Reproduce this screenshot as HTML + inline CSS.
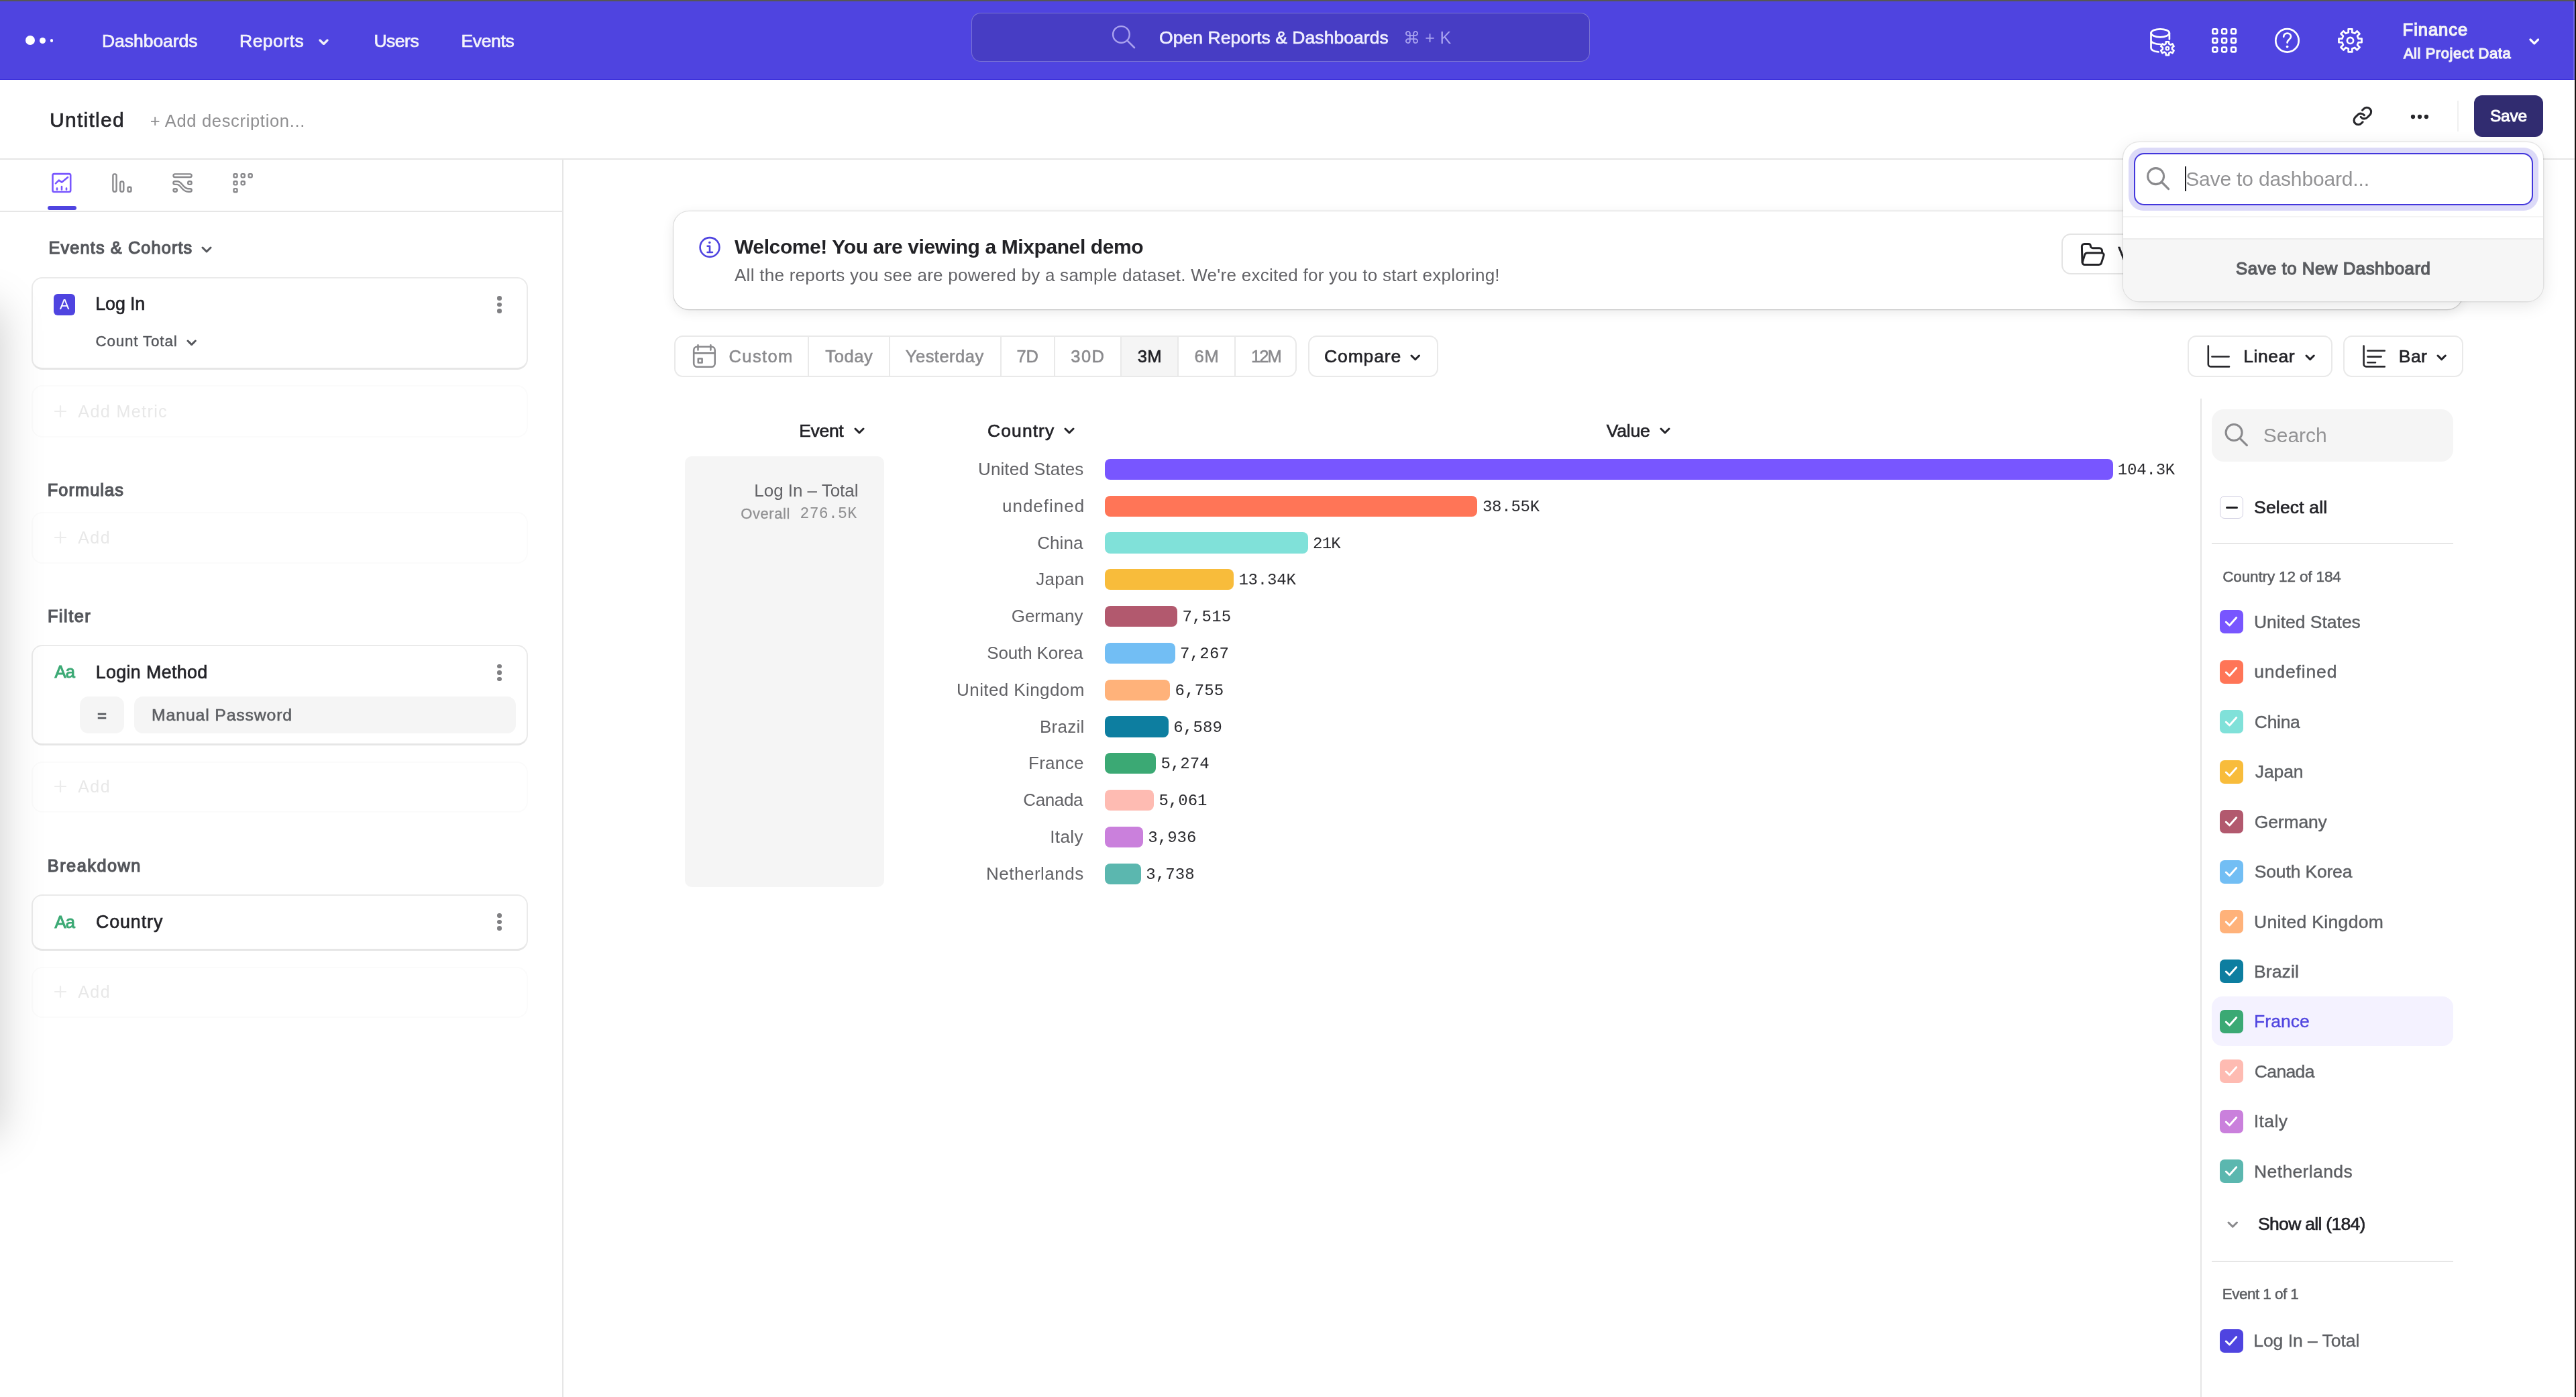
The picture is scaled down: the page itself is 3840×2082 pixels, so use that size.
<!DOCTYPE html>
<html lang="en"><head><meta charset="utf-8"><title>Untitled - Mixpanel</title>
<style>
html,body{margin:0;padding:0;background:#fff;}
body{width:3840px;height:2082px;position:relative;overflow:hidden;font-family:"Liberation Sans",Arial,sans-serif;}
div,svg{position:absolute}
</style></head><body><div id="app" style="left:0;top:0;width:3840px;height:2082px;will-change:transform;">
<div style="position:absolute;left:0px;top:0px;width:3840px;height:119px;box-sizing:border-box;background:#4f44e0;border-bottom:1px solid #3d31dc;"></div>
<div style="position:absolute;left:38px;top:53px;width:14px;height:14px;box-sizing:border-box;background:#fff;border-radius:50%;"></div>
<div style="position:absolute;left:59px;top:55.5px;width:9px;height:9.0px;box-sizing:border-box;background:#fff;border-radius:50%;"></div>
<div style="position:absolute;left:74.5px;top:58px;width:4.5px;height:4.5px;box-sizing:border-box;background:#fff;border-radius:50%;"></div>
<div style="position:absolute;top:43.5px;font:400 26.5px/34px 'Liberation Sans',Arial,sans-serif;color:#f4f4fb;letter-spacing:-0.04px;white-space:nowrap;-webkit-text-stroke:0.7px #f4f4fb;left:152.0px;">Dashboards</div>
<div style="position:absolute;top:43.5px;font:400 26.5px/34px 'Liberation Sans',Arial,sans-serif;color:#f4f4fb;letter-spacing:0.49px;white-space:nowrap;-webkit-text-stroke:0.7px #f4f4fb;left:357.0px;">Reports</div>
<svg style="position:absolute;left:475.2px;top:57.65px;" width="15" height="9.5" viewBox="-2 -2 15 9.5" fill="none"><path d="M0 0 L5.5 5.5 L11 0" stroke="#f2f2f8" stroke-width="3.2" stroke-linecap="round" stroke-linejoin="round"/></svg>
<div style="position:absolute;top:43.5px;font:400 26.5px/34px 'Liberation Sans',Arial,sans-serif;color:#f4f4fb;letter-spacing:-0.49px;white-space:nowrap;-webkit-text-stroke:0.7px #f4f4fb;left:557.4px;">Users</div>
<div style="position:absolute;top:43.5px;font:400 26.5px/34px 'Liberation Sans',Arial,sans-serif;color:#f4f4fb;letter-spacing:-0.34px;white-space:nowrap;-webkit-text-stroke:0.7px #f4f4fb;left:687.4px;">Events</div>
<div style="position:absolute;left:1448px;top:19px;width:922px;height:73px;box-sizing:border-box;background:#473dc4;border:1.5px solid rgba(255,255,255,.28);border-radius:14px;"></div>
<div style="position:absolute;top:39.0px;font:400 26.5px/34px 'Liberation Sans',Arial,sans-serif;color:#f0efff;letter-spacing:0.06px;white-space:nowrap;-webkit-text-stroke:0.65px #f0efff;left:1728.1px;">Open Reports &amp; Dashboards</div>
<div style="position:absolute;top:40.0px;font:400 25px/32px 'Liberation Sans',Arial,sans-serif;color:#a9a3f0;letter-spacing:0.40px;white-space:nowrap;left:2091.5px;">⌘ + K</div>
<div style="position:absolute;top:27.8px;font:400 25.5px/33px 'Liberation Sans',Arial,sans-serif;color:#f3f3f8;letter-spacing:0.97px;white-space:nowrap;-webkit-text-stroke:1.25px #f3f3f8;left:3581.6px;">Finance</div>
<div style="position:absolute;top:65.8px;font:400 21.8px/28px 'Liberation Sans',Arial,sans-serif;color:#f3f3f8;letter-spacing:0.63px;white-space:nowrap;-webkit-text-stroke:1.25px #f3f3f8;left:3582.9px;">All Project Data</div>
<svg style="position:absolute;left:3769.7px;top:57.1px;" width="15.6" height="9.8" viewBox="-2 -2 15.6 9.8" fill="none"><path d="M0 0 L5.8 5.8 L11.6 0" stroke="#fff" stroke-width="3.2" stroke-linecap="round" stroke-linejoin="round"/></svg>
<div style="position:absolute;left:0px;top:236px;width:3840px;height:2px;box-sizing:border-box;background:#e6e6e6;"></div>
<div style="position:absolute;top:158.5px;font:400 30px/39px 'Liberation Sans',Arial,sans-serif;color:#25252a;letter-spacing:1.26px;white-space:nowrap;-webkit-text-stroke:0.7px #25252a;left:74.1px;">Untitled</div>
<div style="position:absolute;top:163.5px;font:400 25.5px/33px 'Liberation Sans',Arial,sans-serif;color:#8f8f91;letter-spacing:0.68px;white-space:nowrap;left:223.8px;">+ Add description...</div>
<div style="position:absolute;left:3663px;top:150px;width:2px;height:46px;box-sizing:border-box;background:#f0f0f0;"></div>
<div style="position:absolute;left:3688px;top:142px;width:103px;height:62px;box-sizing:border-box;background:#312c70;border-radius:12px;"></div>
<div style="position:absolute;top:157.0px;font:400 24.5px/31px 'Liberation Sans',Arial,sans-serif;color:#fff;letter-spacing:-0.22px;white-space:nowrap;-webkit-text-stroke:0.9px #fff;left:3711.9px;">Save</div>
<div style="position:absolute;left:838px;top:238px;width:2px;height:1844px;box-sizing:border-box;background:#e6e6e6;"></div>
<div style="position:absolute;left:0px;top:314px;width:838px;height:1.6999999999999886px;box-sizing:border-box;background:#e6e6e6;"></div>
<div style="position:absolute;left:70.5px;top:307px;width:43.0px;height:6px;box-sizing:border-box;background:#4f44e0;border-radius:3px;"></div>
<div style="position:absolute;top:353.3px;font:400 25.3px/32px 'Liberation Sans',Arial,sans-serif;color:#55575c;letter-spacing:1.12px;white-space:nowrap;-webkit-text-stroke:1.25px #55575c;left:72.6px;">Events &amp; Cohorts</div>
<svg style="position:absolute;left:300.0px;top:366.5px;" width="16" height="10.0" viewBox="-2 -2 16 10.0" fill="none"><path d="M0 0 L6.0 6.0 L12 0" stroke="#55575c" stroke-width="3" stroke-linecap="round" stroke-linejoin="round"/></svg>
<div style="position:absolute;left:47px;top:413px;width:740px;height:138px;box-sizing:border-box;background:#fff;border:2px solid #eaeaea;border-bottom:3px solid #e6e6e6;border-radius:16px;"></div>
<div style="position:absolute;left:80px;top:438px;width:32px;height:32px;box-sizing:border-box;background:#4f44e0;border-radius:6px;"></div>
<div style="position:absolute;top:439.5px;font:400 22px/28px 'Liberation Sans',Arial,sans-serif;color:#fff;letter-spacing:0.00px;white-space:nowrap;left:88.8px;">A</div>
<div style="position:absolute;top:435.9px;font:400 26.8px/34px 'Liberation Sans',Arial,sans-serif;color:#222227;letter-spacing:-0.11px;white-space:nowrap;-webkit-text-stroke:0.65px #222227;left:142.3px;">Log In</div>
<div style="position:absolute;top:494.0px;font:400 22.4px/29px 'Liberation Sans',Arial,sans-serif;color:#55575c;letter-spacing:0.83px;white-space:nowrap;-webkit-text-stroke:0.45px #55575c;left:142.5px;">Count Total</div>
<svg style="position:absolute;left:278.35px;top:505.675px;" width="15.3" height="9.65" viewBox="-2 -2 15.3 9.65" fill="none"><path d="M0 0 L5.65 5.65 L11.3 0" stroke="#55575c" stroke-width="3" stroke-linecap="round" stroke-linejoin="round"/></svg>
<div style="position:absolute;left:47px;top:573.5px;width:740px;height:78.0px;box-sizing:border-box;border:2px solid #fbfbfb;border-radius:16px;"></div>
<svg style="position:absolute;left:80px;top:602.7px;" width="20" height="20" viewBox="-10 -10 20 20" fill="none"><path d="M-8 0 H8 M0 -8 V8" stroke="#ececec" stroke-width="2.2" stroke-linecap="round"/></svg>
<div style="position:absolute;top:597.0px;font:400 25.2px/32px 'Liberation Sans',Arial,sans-serif;color:#e8e8e8;letter-spacing:1.33px;white-space:nowrap;left:116.3px;">Add Metric</div>
<div style="position:absolute;top:714.4px;font:400 25.3px/32px 'Liberation Sans',Arial,sans-serif;color:#55575c;letter-spacing:1.09px;white-space:nowrap;-webkit-text-stroke:1.25px #55575c;left:70.8px;">Formulas</div>
<div style="position:absolute;left:47px;top:763px;width:740px;height:76.5px;box-sizing:border-box;border:2px solid #fbfbfb;border-radius:16px;"></div>
<svg style="position:absolute;left:80px;top:791px;" width="20" height="20" viewBox="-10 -10 20 20" fill="none"><path d="M-8 0 H8 M0 -8 V8" stroke="#ececec" stroke-width="2.2" stroke-linecap="round"/></svg>
<div style="position:absolute;top:784.8px;font:400 25px/32px 'Liberation Sans',Arial,sans-serif;color:#e8e8e8;letter-spacing:1.38px;white-space:nowrap;left:116.3px;">Add</div>
<div style="position:absolute;top:901.6px;font:400 25.3px/32px 'Liberation Sans',Arial,sans-serif;color:#55575c;letter-spacing:1.52px;white-space:nowrap;-webkit-text-stroke:1.25px #55575c;left:70.9px;">Filter</div>
<div style="position:absolute;left:47px;top:961px;width:740px;height:149.5px;box-sizing:border-box;background:#fff;border:2px solid #eaeaea;border-bottom:3px solid #e6e6e6;border-radius:16px;"></div>
<div style="position:absolute;top:985.3px;font:400 25.5px/33px 'Liberation Sans',Arial,sans-serif;color:#3ba974;letter-spacing:-0.80px;white-space:nowrap;-webkit-text-stroke:1.0px #3ba974;left:81.5px;">Aa</div>
<div style="position:absolute;top:985.2px;font:400 26.8px/34px 'Liberation Sans',Arial,sans-serif;color:#222227;letter-spacing:0.38px;white-space:nowrap;-webkit-text-stroke:0.65px #222227;left:142.7px;">Login Method</div>
<div style="position:absolute;left:119.4px;top:1038px;width:65.4px;height:54.59999999999991px;box-sizing:border-box;background:#f5f5f5;border-radius:13px;"></div>
<div style="position:absolute;top:1050.5px;font:400 24px/31px 'Liberation Sans',Arial,sans-serif;color:#55575c;letter-spacing:0.00px;white-space:nowrap;-webkit-text-stroke:0.8px #55575c;left:145.0px;">=</div>
<div style="position:absolute;left:200.4px;top:1038px;width:568.6px;height:54.59999999999991px;box-sizing:border-box;background:#f5f5f5;border-radius:13px;"></div>
<div style="position:absolute;top:1049.6px;font:400 24.8px/32px 'Liberation Sans',Arial,sans-serif;color:#5c5e62;letter-spacing:0.85px;white-space:nowrap;-webkit-text-stroke:0.6px #5c5e62;left:226.1px;">Manual Password</div>
<div style="position:absolute;left:47px;top:1134.5px;width:740px;height:76.5px;box-sizing:border-box;border:2px solid #fbfbfb;border-radius:16px;"></div>
<svg style="position:absolute;left:80px;top:1162px;" width="20" height="20" viewBox="-10 -10 20 20" fill="none"><path d="M-8 0 H8 M0 -8 V8" stroke="#ececec" stroke-width="2.2" stroke-linecap="round"/></svg>
<div style="position:absolute;top:1155.8px;font:400 25px/32px 'Liberation Sans',Arial,sans-serif;color:#e8e8e8;letter-spacing:1.38px;white-space:nowrap;left:116.3px;">Add</div>
<div style="position:absolute;top:1273.6px;font:400 25.3px/32px 'Liberation Sans',Arial,sans-serif;color:#55575c;letter-spacing:1.51px;white-space:nowrap;-webkit-text-stroke:1.25px #55575c;left:70.8px;">Breakdown</div>
<div style="position:absolute;left:47px;top:1333px;width:740px;height:84px;box-sizing:border-box;background:#fff;border:2px solid #eaeaea;border-bottom:3px solid #e6e6e6;border-radius:16px;"></div>
<div style="position:absolute;top:1357.8px;font:400 25.5px/33px 'Liberation Sans',Arial,sans-serif;color:#3ba974;letter-spacing:-0.80px;white-space:nowrap;-webkit-text-stroke:1.0px #3ba974;left:81.5px;">Aa</div>
<div style="position:absolute;top:1357.2px;font:400 26.8px/34px 'Liberation Sans',Arial,sans-serif;color:#222227;letter-spacing:0.94px;white-space:nowrap;-webkit-text-stroke:0.65px #222227;left:142.9px;">Country</div>
<div style="position:absolute;left:47px;top:1440.5px;width:740px;height:76.5px;box-sizing:border-box;border:2px solid #fbfbfb;border-radius:16px;"></div>
<svg style="position:absolute;left:80px;top:1468px;" width="20" height="20" viewBox="-10 -10 20 20" fill="none"><path d="M-8 0 H8 M0 -8 V8" stroke="#ececec" stroke-width="2.2" stroke-linecap="round"/></svg>
<div style="position:absolute;top:1461.8px;font:400 25px/32px 'Liberation Sans',Arial,sans-serif;color:#e8e8e8;letter-spacing:1.38px;white-space:nowrap;left:116.3px;">Add</div>
<div style="position:absolute;left:741.2px;top:441.0px;width:6.599999999999909px;height:6.600000000000023px;box-sizing:border-box;background:#808083;border-radius:50%;"></div>
<div style="position:absolute;left:741.2px;top:450.7px;width:6.599999999999909px;height:6.600000000000023px;box-sizing:border-box;background:#808083;border-radius:50%;"></div>
<div style="position:absolute;left:741.2px;top:460.4px;width:6.599999999999909px;height:6.600000000000023px;box-sizing:border-box;background:#808083;border-radius:50%;"></div>
<div style="position:absolute;left:741.2px;top:989.5px;width:6.599999999999909px;height:6.599999999999909px;box-sizing:border-box;background:#808083;border-radius:50%;"></div>
<div style="position:absolute;left:741.2px;top:999.2px;width:6.599999999999909px;height:6.599999999999909px;box-sizing:border-box;background:#808083;border-radius:50%;"></div>
<div style="position:absolute;left:741.2px;top:1008.9000000000001px;width:6.599999999999909px;height:6.599999999999909px;box-sizing:border-box;background:#808083;border-radius:50%;"></div>
<div style="position:absolute;left:741.2px;top:1361.0px;width:6.599999999999909px;height:6.599999999999909px;box-sizing:border-box;background:#808083;border-radius:50%;"></div>
<div style="position:absolute;left:741.2px;top:1370.7px;width:6.599999999999909px;height:6.599999999999909px;box-sizing:border-box;background:#808083;border-radius:50%;"></div>
<div style="position:absolute;left:741.2px;top:1380.4px;width:6.599999999999909px;height:6.599999999999909px;box-sizing:border-box;background:#808083;border-radius:50%;"></div>
<div style="position:absolute;left:1004px;top:315px;width:2667px;height:146px;box-sizing:border-box;background:#fff;border-radius:23px;box-shadow:0 0 0 1.2px rgba(0,0,0,.11),0 1px 2px rgba(0,0,0,.10),0 4px 18px rgba(0,0,0,.09);"></div>
<div style="position:absolute;top:348.0px;font:700 30px/39px 'Liberation Sans',Arial,sans-serif;color:#222226;letter-spacing:-0.40px;white-space:nowrap;left:1095.0px;">Welcome! You are viewing a Mixpanel demo</div>
<div style="position:absolute;top:394.0px;font:400 26px/33px 'Liberation Sans',Arial,sans-serif;color:#626266;letter-spacing:0.27px;white-space:nowrap;left:1095.0px;">All the reports you see are powered by a sample dataset. We&#x27;re excited for you to start exploring!</div>
<div style="position:absolute;left:3073px;top:347.5px;width:327px;height:61.5px;box-sizing:border-box;background:#fff;border:2px solid #e4e4e4;border-radius:14px;"></div>
<div style="position:absolute;top:360.5px;font:400 27px/35px 'Liberation Sans',Arial,sans-serif;color:#222227;letter-spacing:-1.58px;white-space:nowrap;-webkit-text-stroke:0.65px #222227;left:3157.3px;">View Sample Boards</div>
<div style="position:absolute;left:1005px;top:500px;width:928px;height:62px;box-sizing:border-box;background:#fff;border:2px solid #e9e9e9;border-radius:13px;"></div>
<div style="position:absolute;left:1670.5px;top:502px;width:85.0px;height:58px;box-sizing:border-box;background:#f5f5f5;"></div>
<div style="position:absolute;left:1204px;top:502px;width:2px;height:58px;box-sizing:border-box;background:#e9e9e9;"></div>
<div style="position:absolute;left:1325px;top:502px;width:2px;height:58px;box-sizing:border-box;background:#e9e9e9;"></div>
<div style="position:absolute;left:1490.5px;top:502px;width:2.0px;height:58px;box-sizing:border-box;background:#e9e9e9;"></div>
<div style="position:absolute;left:1570.5px;top:502px;width:2.0px;height:58px;box-sizing:border-box;background:#e9e9e9;"></div>
<div style="position:absolute;left:1669.5px;top:502px;width:2.0px;height:58px;box-sizing:border-box;background:#e9e9e9;"></div>
<div style="position:absolute;left:1754.5px;top:502px;width:2.0px;height:58px;box-sizing:border-box;background:#e9e9e9;"></div>
<div style="position:absolute;left:1839.5px;top:502px;width:2.0px;height:58px;box-sizing:border-box;background:#e9e9e9;"></div>
<div style="position:absolute;top:514.5px;font:400 25.5px/33px 'Liberation Sans',Arial,sans-serif;color:#8a8a8d;letter-spacing:1.39px;white-space:nowrap;-webkit-text-stroke:0.55px #8a8a8d;left:1086.5px;">Custom</div>
<div style="position:absolute;top:514.5px;font:400 25.5px/33px 'Liberation Sans',Arial,sans-serif;color:#8a8a8d;letter-spacing:0.61px;white-space:nowrap;-webkit-text-stroke:0.55px #8a8a8d;left:1230.3px;">Today</div>
<div style="position:absolute;top:514.5px;font:400 25.5px/33px 'Liberation Sans',Arial,sans-serif;color:#8a8a8d;letter-spacing:0.49px;white-space:nowrap;-webkit-text-stroke:0.55px #8a8a8d;left:1349.8px;">Yesterday</div>
<div style="position:absolute;top:514.5px;font:400 25.5px/33px 'Liberation Sans',Arial,sans-serif;color:#8a8a8d;letter-spacing:-0.30px;white-space:nowrap;-webkit-text-stroke:0.55px #8a8a8d;left:1515.5px;">7D</div>
<div style="position:absolute;top:514.5px;font:400 25.5px/33px 'Liberation Sans',Arial,sans-serif;color:#8a8a8d;letter-spacing:1.48px;white-space:nowrap;-webkit-text-stroke:0.55px #8a8a8d;left:1596.3px;">30D</div>
<div style="position:absolute;top:514.5px;font:400 25.5px/33px 'Liberation Sans',Arial,sans-serif;color:#222227;letter-spacing:0.35px;white-space:nowrap;-webkit-text-stroke:0.65px #222227;left:1695.8px;">3M</div>
<div style="position:absolute;top:514.5px;font:400 25.5px/33px 'Liberation Sans',Arial,sans-serif;color:#8a8a8d;letter-spacing:0.70px;white-space:nowrap;-webkit-text-stroke:0.55px #8a8a8d;left:1780.5px;">6M</div>
<div style="position:absolute;top:514.5px;font:400 25.5px/33px 'Liberation Sans',Arial,sans-serif;color:#8a8a8d;letter-spacing:-1.90px;white-space:nowrap;-webkit-text-stroke:0.55px #8a8a8d;left:1865.0px;">12M</div>
<div style="position:absolute;left:1950px;top:500px;width:193.5px;height:62px;box-sizing:border-box;background:#fff;border:2px solid #e9e9e9;border-radius:13px;"></div>
<div style="position:absolute;top:514.0px;font:400 26.5px/34px 'Liberation Sans',Arial,sans-serif;color:#222227;letter-spacing:0.85px;white-space:nowrap;-webkit-text-stroke:0.65px #222227;left:1974.1px;">Compare</div>
<svg style="position:absolute;left:2102.25px;top:528.125px;" width="15.5" height="9.75" viewBox="-2 -2 15.5 9.75" fill="none"><path d="M0 0 L5.75 5.75 L11.5 0" stroke="#222227" stroke-width="3" stroke-linecap="round" stroke-linejoin="round"/></svg>
<div style="position:absolute;left:3261px;top:500px;width:216px;height:62px;box-sizing:border-box;background:#fff;border:2px solid #e9e9e9;border-radius:13px;"></div>
<div style="position:absolute;top:514.0px;font:400 26.5px/34px 'Liberation Sans',Arial,sans-serif;color:#222227;letter-spacing:0.52px;white-space:nowrap;-webkit-text-stroke:0.65px #222227;left:3344.3px;">Linear</div>
<svg style="position:absolute;left:3435.85px;top:528.175px;" width="15.3" height="9.65" viewBox="-2 -2 15.3 9.65" fill="none"><path d="M0 0 L5.65 5.65 L11.3 0" stroke="#222227" stroke-width="3" stroke-linecap="round" stroke-linejoin="round"/></svg>
<div style="position:absolute;left:3493px;top:500px;width:179px;height:62px;box-sizing:border-box;background:#fff;border:2px solid #e9e9e9;border-radius:13px;"></div>
<div style="position:absolute;top:514.0px;font:400 26.5px/34px 'Liberation Sans',Arial,sans-serif;color:#222227;letter-spacing:0.42px;white-space:nowrap;-webkit-text-stroke:0.65px #222227;left:3575.8px;">Bar</div>
<svg style="position:absolute;left:3631.65px;top:528.175px;" width="15.3" height="9.65" viewBox="-2 -2 15.3 9.65" fill="none"><path d="M0 0 L5.65 5.65 L11.3 0" stroke="#222227" stroke-width="3" stroke-linecap="round" stroke-linejoin="round"/></svg>
<div style="position:absolute;top:625.0px;font:400 26.5px/34px 'Liberation Sans',Arial,sans-serif;color:#222227;letter-spacing:-0.35px;white-space:nowrap;-webkit-text-stroke:0.65px #222227;left:1191.3px;">Event</div>
<svg style="position:absolute;left:1273.3px;top:637.2px;" width="16" height="10.0" viewBox="-2 -2 16 10.0" fill="none"><path d="M0 0 L6.0 6.0 L12 0" stroke="#222227" stroke-width="3" stroke-linecap="round" stroke-linejoin="round"/></svg>
<div style="position:absolute;top:625.0px;font:400 26.5px/34px 'Liberation Sans',Arial,sans-serif;color:#222227;letter-spacing:1.06px;white-space:nowrap;-webkit-text-stroke:0.65px #222227;left:1472.1px;">Country</div>
<svg style="position:absolute;left:1586.3px;top:637.2px;" width="16" height="10.0" viewBox="-2 -2 16 10.0" fill="none"><path d="M0 0 L6.0 6.0 L12 0" stroke="#222227" stroke-width="3" stroke-linecap="round" stroke-linejoin="round"/></svg>
<div style="position:absolute;top:625.0px;font:400 26.5px/34px 'Liberation Sans',Arial,sans-serif;color:#222227;letter-spacing:-0.23px;white-space:nowrap;-webkit-text-stroke:0.65px #222227;left:2394.8px;">Value</div>
<svg style="position:absolute;left:2473.7px;top:637.2px;" width="16" height="10.0" viewBox="-2 -2 16 10.0" fill="none"><path d="M0 0 L6.0 6.0 L12 0" stroke="#222227" stroke-width="3" stroke-linecap="round" stroke-linejoin="round"/></svg>
<div style="position:absolute;left:1020.5px;top:679.5px;width:297.5px;height:642.0px;box-sizing:border-box;background:#f5f5f5;border-radius:10px;"></div>
<div style="position:absolute;top:714.5px;font:400 26px/33px 'Liberation Sans',Arial,sans-serif;color:#626266;letter-spacing:-0.03px;white-space:nowrap;right:2560.5px;text-align:right;">Log In – Total</div>
<div style="position:absolute;top:752.0px;font:400 22px/28px 'Liberation Sans',Arial,sans-serif;color:#8f8f91;letter-spacing:0.58px;white-space:nowrap;-webkit-text-stroke:0.3px #8f8f91;left:1104.2px;">Overall</div>
<div style="position:absolute;top:752.0px;font:400 23px/29px 'Liberation Mono','DejaVu Sans Mono',monospace;color:#8f8f91;letter-spacing:0.35px;white-space:nowrap;left:1192.5px;">276.5K</div>
<div style="position:absolute;top:682.9px;font:400 26px/33px 'Liberation Sans',Arial,sans-serif;color:#626266;letter-spacing:0.10px;white-space:nowrap;right:2224.6px;text-align:right;">United States</div>
<div style="position:absolute;left:1647px;top:683.8px;width:1502.5px;height:31.200000000000045px;box-sizing:border-box;background:#7856ff;border-radius:8px;"></div>
<div style="position:absolute;top:684.9px;font:400 24px/31px 'Liberation Mono','DejaVu Sans Mono',monospace;color:#2a2a2e;letter-spacing:-0.19px;white-space:nowrap;left:3156.8px;">104.3K</div>
<div style="position:absolute;top:737.7px;font:400 26px/33px 'Liberation Sans',Arial,sans-serif;color:#626266;letter-spacing:1.00px;white-space:nowrap;right:2222.8px;text-align:right;">undefined</div>
<div style="position:absolute;left:1647px;top:738.6px;width:555.4000000000001px;height:31.299999999999955px;box-sizing:border-box;background:#ff7557;border-radius:8px;"></div>
<div style="position:absolute;top:739.7px;font:400 24px/31px 'Liberation Mono','DejaVu Sans Mono',monospace;color:#2a2a2e;letter-spacing:-0.24px;white-space:nowrap;left:2209.9px;">38.55K</div>
<div style="position:absolute;top:792.5px;font:400 26px/33px 'Liberation Sans',Arial,sans-serif;color:#626266;letter-spacing:0.06px;white-space:nowrap;right:2225.5px;text-align:right;">China</div>
<div style="position:absolute;left:1647px;top:793.4px;width:302.5px;height:31.300000000000068px;box-sizing:border-box;background:#80e1d9;border-radius:8px;"></div>
<div style="position:absolute;top:794.5px;font:400 24px/31px 'Liberation Mono','DejaVu Sans Mono',monospace;color:#2a2a2e;letter-spacing:-0.73px;white-space:nowrap;left:1957.0px;">21K</div>
<div style="position:absolute;top:847.3px;font:400 26px/33px 'Liberation Sans',Arial,sans-serif;color:#626266;letter-spacing:0.25px;white-space:nowrap;right:2223.7px;text-align:right;">Japan</div>
<div style="position:absolute;left:1647px;top:848.2px;width:192.20000000000005px;height:31.299999999999955px;box-sizing:border-box;background:#f8bc3b;border-radius:8px;"></div>
<div style="position:absolute;top:849.3px;font:400 24px/31px 'Liberation Mono','DejaVu Sans Mono',monospace;color:#2a2a2e;letter-spacing:-0.19px;white-space:nowrap;left:1846.4px;">13.34K</div>
<div style="position:absolute;top:902.1px;font:400 26px/33px 'Liberation Sans',Arial,sans-serif;color:#626266;letter-spacing:-0.04px;white-space:nowrap;right:2225.6px;text-align:right;">Germany</div>
<div style="position:absolute;left:1647px;top:903.0px;width:108.29999999999995px;height:31.299999999999955px;box-sizing:border-box;background:#b2596e;border-radius:8px;"></div>
<div style="position:absolute;top:904.1px;font:400 24px/31px 'Liberation Mono','DejaVu Sans Mono',monospace;color:#2a2a2e;letter-spacing:0.14px;white-space:nowrap;left:1762.5px;">7,515</div>
<div style="position:absolute;top:957.0px;font:400 26px/33px 'Liberation Sans',Arial,sans-serif;color:#626266;letter-spacing:-0.12px;white-space:nowrap;right:2225.6px;text-align:right;">South Korea</div>
<div style="position:absolute;left:1647px;top:957.8px;width:104.70000000000005px;height:31.300000000000068px;box-sizing:border-box;background:#72bef4;border-radius:8px;"></div>
<div style="position:absolute;top:959.0px;font:400 24px/31px 'Liberation Mono','DejaVu Sans Mono',monospace;color:#2a2a2e;letter-spacing:0.26px;white-space:nowrap;left:1758.9px;">7,267</div>
<div style="position:absolute;top:1011.8px;font:400 26px/33px 'Liberation Sans',Arial,sans-serif;color:#626266;letter-spacing:0.40px;white-space:nowrap;right:2223.3px;text-align:right;">United Kingdom</div>
<div style="position:absolute;left:1647px;top:1012.6px;width:97.29999999999995px;height:31.300000000000068px;box-sizing:border-box;background:#ffb27a;border-radius:8px;"></div>
<div style="position:absolute;top:1013.8px;font:400 24px/31px 'Liberation Mono','DejaVu Sans Mono',monospace;color:#2a2a2e;letter-spacing:0.14px;white-space:nowrap;left:1751.6px;">6,755</div>
<div style="position:absolute;top:1066.6px;font:400 26px/33px 'Liberation Sans',Arial,sans-serif;color:#626266;letter-spacing:0.25px;white-space:nowrap;right:2223.5px;text-align:right;">Brazil</div>
<div style="position:absolute;left:1647px;top:1067.4px;width:94.90000000000009px;height:31.299999999999955px;box-sizing:border-box;background:#0d7ea0;border-radius:8px;"></div>
<div style="position:absolute;top:1068.6px;font:400 24px/31px 'Liberation Mono','DejaVu Sans Mono',monospace;color:#2a2a2e;letter-spacing:0.20px;white-space:nowrap;left:1749.2px;">6,589</div>
<div style="position:absolute;top:1121.4px;font:400 26px/33px 'Liberation Sans',Arial,sans-serif;color:#626266;letter-spacing:0.30px;white-space:nowrap;right:2224.3px;text-align:right;">France</div>
<div style="position:absolute;left:1647px;top:1122.2px;width:76.0px;height:31.299999999999955px;box-sizing:border-box;background:#3ba974;border-radius:8px;"></div>
<div style="position:absolute;top:1123.4px;font:400 24px/31px 'Liberation Mono','DejaVu Sans Mono',monospace;color:#2a2a2e;letter-spacing:0.01px;white-space:nowrap;left:1730.5px;">5,274</div>
<div style="position:absolute;top:1176.2px;font:400 26px/33px 'Liberation Sans',Arial,sans-serif;color:#626266;letter-spacing:-0.35px;white-space:nowrap;right:2225.8px;text-align:right;">Canada</div>
<div style="position:absolute;left:1647px;top:1177.0px;width:72.90000000000009px;height:31.299999999999955px;box-sizing:border-box;background:#febbb2;border-radius:8px;"></div>
<div style="position:absolute;top:1178.2px;font:400 24px/31px 'Liberation Mono','DejaVu Sans Mono',monospace;color:#2a2a2e;letter-spacing:0.01px;white-space:nowrap;left:1727.4px;">5,061</div>
<div style="position:absolute;top:1231.0px;font:400 26px/33px 'Liberation Sans',Arial,sans-serif;color:#626266;letter-spacing:0.38px;white-space:nowrap;right:2225.2px;text-align:right;">Italy</div>
<div style="position:absolute;left:1647px;top:1231.8px;width:56.700000000000045px;height:31.40000000000009px;box-sizing:border-box;background:#ca80dc;border-radius:8px;"></div>
<div style="position:absolute;top:1233.0px;font:400 24px/31px 'Liberation Mono','DejaVu Sans Mono',monospace;color:#2a2a2e;letter-spacing:0.07px;white-space:nowrap;left:1711.2px;">3,936</div>
<div style="position:absolute;top:1285.8px;font:400 26px/33px 'Liberation Sans',Arial,sans-serif;color:#626266;letter-spacing:0.50px;white-space:nowrap;right:2224.3px;text-align:right;">Netherlands</div>
<div style="position:absolute;left:1647px;top:1286.7px;width:53.799999999999955px;height:31.299999999999955px;box-sizing:border-box;background:#5bb7af;border-radius:8px;"></div>
<div style="position:absolute;top:1287.8px;font:400 24px/31px 'Liberation Mono','DejaVu Sans Mono',monospace;color:#2a2a2e;letter-spacing:0.07px;white-space:nowrap;left:1708.3px;">3,738</div>
<div style="position:absolute;left:3279.5px;top:594px;width:2.0px;height:1488px;box-sizing:border-box;background:#e6e6e6;"></div>
<div style="position:absolute;left:3297px;top:609.5px;width:360px;height:78.0px;box-sizing:border-box;background:#f5f5f5;border-radius:18px;"></div>
<div style="position:absolute;top:629.0px;font:400 30px/39px 'Liberation Sans',Arial,sans-serif;color:#939395;letter-spacing:-0.05px;white-space:nowrap;left:3373.8px;">Search</div>
<div style="position:absolute;left:3309px;top:739.3px;width:34.80000000000018px;height:34.0px;box-sizing:border-box;background:#fff;border:1.7px solid #cfcde0;border-radius:7px;"></div>
<div style="position:absolute;left:3317.5px;top:754.8px;width:18.0px;height:3.0px;box-sizing:border-box;background:#1b1b1f;border-radius:1.5px;"></div>
<div style="position:absolute;top:739.0px;font:400 26.5px/34px 'Liberation Sans',Arial,sans-serif;color:#222227;letter-spacing:0.18px;white-space:nowrap;-webkit-text-stroke:0.65px #222227;left:3360.1px;">Select all</div>
<div style="position:absolute;left:3297px;top:808.5px;width:360px;height:2.0px;box-sizing:border-box;background:#e6e6e6;"></div>
<div style="position:absolute;top:844.5px;font:400 22.5px/29px 'Liberation Sans',Arial,sans-serif;color:#5b5d61;letter-spacing:-0.14px;white-space:nowrap;-webkit-text-stroke:0.5px #5b5d61;left:3313.2px;">Country 12 of 184</div>
<div style="position:absolute;left:3309px;top:909.3px;width:34.80000000000018px;height:35.0px;box-sizing:border-box;background:#7856ff;border-radius:7px;"></div>
<svg style="position:absolute;left:3309px;top:909.3px;" width="34.8" height="35" viewBox="0 0 34.6 34.6" fill="none"><path d="M9.2 17.8 L14.4 22.8 L24.6 11.4" stroke="#fff" stroke-width="2.9" stroke-linecap="round" stroke-linejoin="round"/></svg>
<div style="position:absolute;top:909.8px;font:400 26.5px/34px 'Liberation Sans',Arial,sans-serif;color:#5c5e62;letter-spacing:-0.02px;white-space:nowrap;-webkit-text-stroke:0.4px #5c5e62;left:3360.0px;">United States</div>
<div style="position:absolute;left:3309px;top:983.8px;width:34.80000000000018px;height:35.0px;box-sizing:border-box;background:#ff7557;border-radius:7px;"></div>
<svg style="position:absolute;left:3309px;top:983.8px;" width="34.8" height="35" viewBox="0 0 34.6 34.6" fill="none"><path d="M9.2 17.8 L14.4 22.8 L24.6 11.4" stroke="#fff" stroke-width="2.9" stroke-linecap="round" stroke-linejoin="round"/></svg>
<div style="position:absolute;top:984.2px;font:400 26.5px/34px 'Liberation Sans',Arial,sans-serif;color:#5c5e62;letter-spacing:0.85px;white-space:nowrap;-webkit-text-stroke:0.4px #5c5e62;left:3360.2px;">undefined</div>
<div style="position:absolute;left:3309px;top:1058.2px;width:34.80000000000018px;height:35.0px;box-sizing:border-box;background:#80e1d9;border-radius:7px;"></div>
<svg style="position:absolute;left:3309px;top:1058.2px;" width="34.8" height="35" viewBox="0 0 34.6 34.6" fill="none"><path d="M9.2 17.8 L14.4 22.8 L24.6 11.4" stroke="#fff" stroke-width="2.9" stroke-linecap="round" stroke-linejoin="round"/></svg>
<div style="position:absolute;top:1058.7px;font:400 26.5px/34px 'Liberation Sans',Arial,sans-serif;color:#5c5e62;letter-spacing:-0.30px;white-space:nowrap;-webkit-text-stroke:0.4px #5c5e62;left:3360.8px;">China</div>
<div style="position:absolute;left:3309px;top:1132.7px;width:34.80000000000018px;height:35.0px;box-sizing:border-box;background:#f8bc3b;border-radius:7px;"></div>
<svg style="position:absolute;left:3309px;top:1132.7px;" width="34.8" height="35" viewBox="0 0 34.6 34.6" fill="none"><path d="M9.2 17.8 L14.4 22.8 L24.6 11.4" stroke="#fff" stroke-width="2.9" stroke-linecap="round" stroke-linejoin="round"/></svg>
<div style="position:absolute;top:1133.2px;font:400 26.5px/34px 'Liberation Sans',Arial,sans-serif;color:#5c5e62;letter-spacing:-0.11px;white-space:nowrap;-webkit-text-stroke:0.4px #5c5e62;left:3361.8px;">Japan</div>
<div style="position:absolute;left:3309px;top:1207.1px;width:34.80000000000018px;height:35.0px;box-sizing:border-box;background:#b2596e;border-radius:7px;"></div>
<svg style="position:absolute;left:3309px;top:1207.1px;" width="34.8" height="35" viewBox="0 0 34.6 34.6" fill="none"><path d="M9.2 17.8 L14.4 22.8 L24.6 11.4" stroke="#fff" stroke-width="2.9" stroke-linecap="round" stroke-linejoin="round"/></svg>
<div style="position:absolute;top:1207.6px;font:400 26.5px/34px 'Liberation Sans',Arial,sans-serif;color:#5c5e62;letter-spacing:-0.16px;white-space:nowrap;-webkit-text-stroke:0.4px #5c5e62;left:3360.8px;">Germany</div>
<div style="position:absolute;left:3309px;top:1281.5px;width:34.80000000000018px;height:35.0px;box-sizing:border-box;background:#72bef4;border-radius:7px;"></div>
<svg style="position:absolute;left:3309px;top:1281.5px;" width="34.8" height="35" viewBox="0 0 34.6 34.6" fill="none"><path d="M9.2 17.8 L14.4 22.8 L24.6 11.4" stroke="#fff" stroke-width="2.9" stroke-linecap="round" stroke-linejoin="round"/></svg>
<div style="position:absolute;top:1282.0px;font:400 26.5px/34px 'Liberation Sans',Arial,sans-serif;color:#5c5e62;letter-spacing:-0.17px;white-space:nowrap;-webkit-text-stroke:0.4px #5c5e62;left:3360.8px;">South Korea</div>
<div style="position:absolute;left:3309px;top:1356.0px;width:34.80000000000018px;height:35.0px;box-sizing:border-box;background:#ffb27a;border-radius:7px;"></div>
<svg style="position:absolute;left:3309px;top:1356.0px;" width="34.8" height="35" viewBox="0 0 34.6 34.6" fill="none"><path d="M9.2 17.8 L14.4 22.8 L24.6 11.4" stroke="#fff" stroke-width="2.9" stroke-linecap="round" stroke-linejoin="round"/></svg>
<div style="position:absolute;top:1356.5px;font:400 26.5px/34px 'Liberation Sans',Arial,sans-serif;color:#5c5e62;letter-spacing:0.33px;white-space:nowrap;-webkit-text-stroke:0.4px #5c5e62;left:3360.0px;">United Kingdom</div>
<div style="position:absolute;left:3309px;top:1430.4px;width:34.80000000000018px;height:35.0px;box-sizing:border-box;background:#0d7ea0;border-radius:7px;"></div>
<svg style="position:absolute;left:3309px;top:1430.4px;" width="34.8" height="35" viewBox="0 0 34.6 34.6" fill="none"><path d="M9.2 17.8 L14.4 22.8 L24.6 11.4" stroke="#fff" stroke-width="2.9" stroke-linecap="round" stroke-linejoin="round"/></svg>
<div style="position:absolute;top:1430.9px;font:400 26.5px/34px 'Liberation Sans',Arial,sans-serif;color:#5c5e62;letter-spacing:0.11px;white-space:nowrap;-webkit-text-stroke:0.4px #5c5e62;left:3360.0px;">Brazil</div>
<div style="position:absolute;left:3297px;top:1485.4px;width:360px;height:74.0px;box-sizing:border-box;background:#f4f2ff;border-radius:16px;"></div>
<div style="position:absolute;left:3309px;top:1504.9px;width:34.80000000000018px;height:35.0px;box-sizing:border-box;background:#3ba974;border-radius:7px;"></div>
<svg style="position:absolute;left:3309px;top:1504.9px;" width="34.8" height="35" viewBox="0 0 34.6 34.6" fill="none"><path d="M9.2 17.8 L14.4 22.8 L24.6 11.4" stroke="#fff" stroke-width="2.9" stroke-linecap="round" stroke-linejoin="round"/></svg>
<div style="position:absolute;top:1505.4px;font:400 26.5px/34px 'Liberation Sans',Arial,sans-serif;color:#4f44e0;letter-spacing:0.06px;white-space:nowrap;-webkit-text-stroke:0.4px #4f44e0;left:3360.0px;">France</div>
<div style="position:absolute;left:3309px;top:1579.3px;width:34.80000000000018px;height:35.0px;box-sizing:border-box;background:#febbb2;border-radius:7px;"></div>
<svg style="position:absolute;left:3309px;top:1579.3px;" width="34.8" height="35" viewBox="0 0 34.6 34.6" fill="none"><path d="M9.2 17.8 L14.4 22.8 L24.6 11.4" stroke="#fff" stroke-width="2.9" stroke-linecap="round" stroke-linejoin="round"/></svg>
<div style="position:absolute;top:1579.8px;font:400 26.5px/34px 'Liberation Sans',Arial,sans-serif;color:#5c5e62;letter-spacing:-0.64px;white-space:nowrap;-webkit-text-stroke:0.4px #5c5e62;left:3360.8px;">Canada</div>
<div style="position:absolute;left:3309px;top:1653.8px;width:34.80000000000018px;height:35.0px;box-sizing:border-box;background:#ca80dc;border-radius:7px;"></div>
<svg style="position:absolute;left:3309px;top:1653.8px;" width="34.8" height="35" viewBox="0 0 34.6 34.6" fill="none"><path d="M9.2 17.8 L14.4 22.8 L24.6 11.4" stroke="#fff" stroke-width="2.9" stroke-linecap="round" stroke-linejoin="round"/></svg>
<div style="position:absolute;top:1654.3px;font:400 26.5px/34px 'Liberation Sans',Arial,sans-serif;color:#5c5e62;letter-spacing:0.39px;white-space:nowrap;-webkit-text-stroke:0.4px #5c5e62;left:3359.8px;">Italy</div>
<div style="position:absolute;left:3309px;top:1728.2px;width:34.80000000000018px;height:35.0px;box-sizing:border-box;background:#5bb7af;border-radius:7px;"></div>
<svg style="position:absolute;left:3309px;top:1728.2px;" width="34.8" height="35" viewBox="0 0 34.6 34.6" fill="none"><path d="M9.2 17.8 L14.4 22.8 L24.6 11.4" stroke="#fff" stroke-width="2.9" stroke-linecap="round" stroke-linejoin="round"/></svg>
<div style="position:absolute;top:1728.8px;font:400 26.5px/34px 'Liberation Sans',Arial,sans-serif;color:#5c5e62;letter-spacing:0.38px;white-space:nowrap;-webkit-text-stroke:0.4px #5c5e62;left:3360.0px;">Netherlands</div>
<svg style="position:absolute;left:3319.75px;top:1819.875px;" width="16.5" height="10.25" viewBox="-2 -2 16.5 10.25" fill="none"><path d="M0 0 L6.25 6.25 L12.5 0" stroke="#8a8a8d" stroke-width="3" stroke-linecap="round" stroke-linejoin="round"/></svg>
<div style="position:absolute;top:1806.5px;font:400 26.5px/34px 'Liberation Sans',Arial,sans-serif;color:#222227;letter-spacing:-0.70px;white-space:nowrap;-webkit-text-stroke:0.65px #222227;left:3366.1px;">Show all (184)</div>
<div style="position:absolute;left:3297px;top:1878.5px;width:360px;height:2.0px;box-sizing:border-box;background:#e6e6e6;"></div>
<div style="position:absolute;top:1914.0px;font:400 22.5px/29px 'Liberation Sans',Arial,sans-serif;color:#5b5d61;letter-spacing:-0.55px;white-space:nowrap;-webkit-text-stroke:0.5px #5b5d61;left:3312.8px;">Event 1 of 1</div>
<div style="position:absolute;left:3309px;top:1980.5px;width:34.80000000000018px;height:35.0px;box-sizing:border-box;background:#4f44e0;border-radius:7px;"></div>
<svg style="position:absolute;left:3309px;top:1980.5px;" width="34.8" height="35" viewBox="0 0 34.6 34.6" fill="none"><path d="M9.2 17.8 L14.4 22.8 L24.6 11.4" stroke="#fff" stroke-width="2.9" stroke-linecap="round" stroke-linejoin="round"/></svg>
<div style="position:absolute;top:1981.0px;font:400 26.5px/34px 'Liberation Sans',Arial,sans-serif;color:#5c5e62;letter-spacing:-0.03px;white-space:nowrap;-webkit-text-stroke:0.35px #5c5e62;left:3359.2px;">Log In – Total</div>
<svg style="position:absolute;left:0;top:0" width="3840" height="2082" viewBox="0 0 3840 2082" fill="none"><ellipse cx="3220.2" cy="49.3" rx="13.7" ry="6" stroke="#fff" stroke-width="2.7" stroke-linecap="round" stroke-linejoin="round"/><path d="M3206.5 49.3 V71.6 C3206.5 74.6 3211 76.9 3217.5 77.4 M3233.9 49.3 V58.5 M3206.5 60.2 C3206.5 63.4 3212.5 66 3220.2 66" stroke="#fff" stroke-width="2.7" stroke-linecap="round" stroke-linejoin="round"/><path d="M3228.53 65.40 L3228.78 62.22 L3233.02 62.22 L3233.27 65.40 L3235.60 66.75 L3238.48 65.37 L3240.60 69.05 L3237.97 70.85 L3237.97 73.55 L3240.60 75.35 L3238.48 79.03 L3235.60 77.65 L3233.27 79.00 L3233.02 82.18 L3228.78 82.18 L3228.53 79.00 L3226.20 77.65 L3223.32 79.03 L3221.20 75.35 L3223.83 73.55 L3223.83 70.85 L3221.20 69.05 L3223.32 65.37 L3226.20 66.75Z" stroke="#fff" stroke-width="2.6" stroke-linejoin="round" fill="#4f44e0"/><circle cx="3230.9" cy="72.2" r="2.3" stroke="#fff" stroke-width="2.2"/><rect x="3298.40" y="43.40" width="6.8" height="6.8" rx="1.8" stroke="#fff" stroke-width="2.7" stroke-linecap="round" stroke-linejoin="round"/><rect x="3312.25" y="43.40" width="6.8" height="6.8" rx="1.8" stroke="#fff" stroke-width="2.7" stroke-linecap="round" stroke-linejoin="round"/><rect x="3326.10" y="43.40" width="6.8" height="6.8" rx="1.8" stroke="#fff" stroke-width="2.7" stroke-linecap="round" stroke-linejoin="round"/><rect x="3298.40" y="57.00" width="6.8" height="6.8" rx="1.8" stroke="#fff" stroke-width="2.7" stroke-linecap="round" stroke-linejoin="round"/><rect x="3312.25" y="57.00" width="6.8" height="6.8" rx="1.8" stroke="#fff" stroke-width="2.7" stroke-linecap="round" stroke-linejoin="round"/><rect x="3326.10" y="57.00" width="6.8" height="6.8" rx="1.8" stroke="#fff" stroke-width="2.7" stroke-linecap="round" stroke-linejoin="round"/><rect x="3298.40" y="70.60" width="6.8" height="6.8" rx="1.8" stroke="#fff" stroke-width="2.7" stroke-linecap="round" stroke-linejoin="round"/><rect x="3312.25" y="70.60" width="6.8" height="6.8" rx="1.8" stroke="#fff" stroke-width="2.7" stroke-linecap="round" stroke-linejoin="round"/><rect x="3326.10" y="70.60" width="6.8" height="6.8" rx="1.8" stroke="#fff" stroke-width="2.7" stroke-linecap="round" stroke-linejoin="round"/><circle cx="3409.5" cy="60.4" r="17.2" stroke="#fff" stroke-width="2.7" stroke-linecap="round" stroke-linejoin="round"/><path d="M3404.2 54.8 C3404.2 51.4 3406.6 49.6 3409.6 49.6 C3412.6 49.6 3415 51.6 3415 54.4 C3415 58.8 3409.6 58.6 3409.6 63.6" stroke="#fff" stroke-width="2.7" stroke-linecap="round" stroke-linejoin="round"/><circle cx="3409.6" cy="69.6" r="1.9" fill="#fff"/><path d="M3500.77 48.20 L3500.66 43.33 L3506.34 43.33 L3506.23 48.20 L3510.20 49.85 L3513.56 46.32 L3517.58 50.34 L3514.05 53.70 L3515.70 57.67 L3520.57 57.56 L3520.57 63.24 L3515.70 63.13 L3514.05 67.10 L3517.58 70.46 L3513.56 74.48 L3510.20 70.95 L3506.23 72.60 L3506.34 77.47 L3500.66 77.47 L3500.77 72.60 L3496.80 70.95 L3493.44 74.48 L3489.42 70.46 L3492.95 67.10 L3491.30 63.13 L3486.43 63.24 L3486.43 57.56 L3491.30 57.67 L3492.95 53.70 L3489.42 50.34 L3493.44 46.32 L3496.80 49.85Z" stroke="#fff" stroke-width="2.7" stroke-linecap="round" stroke-linejoin="round"/><circle cx="3503.5" cy="60.4" r="4.6" stroke="#fff" stroke-width="2.7" stroke-linecap="round" stroke-linejoin="round"/><circle cx="1671.4" cy="51.4" r="12.3" stroke="#a9a1ee" stroke-width="2.4"/><path d="M1680.3 60.3 L1691 71" stroke="#a9a1ee" stroke-width="2.6" stroke-linecap="round"/><g transform="translate(3506.4,157.6) scale(1.285)" stroke="#27272b" stroke-width="2.4" stroke-linecap="round" stroke-linejoin="round"><path d="M10 13a5 5 0 0 0 7.54.54l3-3a5 5 0 0 0-7.07-7.07l-1.72 1.71"/><path d="M14 11a5 5 0 0 0-7.54-.54l-3 3a5 5 0 0 0 7.07 7.07l1.71-1.71"/></g><circle cx="3597" cy="174" r="3.15" fill="#27272b"/><circle cx="3607" cy="174" r="3.15" fill="#27272b"/><circle cx="3616.9" cy="174" r="3.15" fill="#27272b"/><rect x="78.5" y="259.1" width="26.7" height="26.9" rx="2.2" stroke="#7856ff" stroke-width="2.6" stroke-linecap="round" stroke-linejoin="round"/><path d="M83 273.4 L87.8 268.6 L92.2 271.6 L101 264.2 M85 280.6 V282.6 M92 278 V282.6 M99 280.6 V282.6" stroke="#7856ff" stroke-width="2.6" stroke-linecap="round" stroke-linejoin="round"/><rect x="168.4" y="259.4" width="5.2" height="26.3" rx="2.4" stroke="#8a8a8d" stroke-width="2.4" stroke-linecap="round" stroke-linejoin="round"/><rect x="179.2" y="270.5" width="5.1" height="15.2" rx="2.4" stroke="#8a8a8d" stroke-width="2.4" stroke-linecap="round" stroke-linejoin="round"/><rect x="190.5" y="278.8" width="5" height="6.9" rx="2" stroke="#8a8a8d" stroke-width="2.4" stroke-linecap="round" stroke-linejoin="round"/><rect x="258.5" y="259.4" width="27.1" height="4.6" rx="2.3" stroke="#8a8a8d" stroke-width="2.4" stroke-linecap="round" stroke-linejoin="round"/><rect x="280.2" y="270.3" width="5.4" height="4.6" rx="2.2" stroke="#8a8a8d" stroke-width="2.4" stroke-linecap="round" stroke-linejoin="round"/><rect x="258.5" y="281.2" width="5.4" height="4.6" rx="2.2" stroke="#8a8a8d" stroke-width="2.4" stroke-linecap="round" stroke-linejoin="round"/><path d="M260.7 270.3 H264 C272 270.3 272.5 281.2 281 281.2 H283.4 A2.3 2.3 0 0 1 283.4 285.8 H280.5 C270.5 285.8 270.5 274.9 263.5 274.9 H260.7 A2.3 2.3 0 0 1 260.7 270.3 Z" stroke="#8a8a8d" stroke-width="2.4" stroke-linecap="round" stroke-linejoin="round"/><rect x="348.45" y="259.25" width="5.1" height="5.1" rx="1.6" stroke="#8a8a8d" stroke-width="2.4" stroke-linecap="round" stroke-linejoin="round"/><rect x="359.65" y="259.25" width="5.1" height="5.1" rx="1.6" stroke="#8a8a8d" stroke-width="2.4" stroke-linecap="round" stroke-linejoin="round"/><rect x="370.65" y="259.25" width="5.1" height="5.1" rx="1.6" stroke="#8a8a8d" stroke-width="2.4" stroke-linecap="round" stroke-linejoin="round"/><rect x="348.45" y="270.25" width="5.1" height="5.1" rx="1.6" stroke="#8a8a8d" stroke-width="2.4" stroke-linecap="round" stroke-linejoin="round"/><rect x="359.65" y="270.25" width="5.1" height="5.1" rx="1.6" stroke="#8a8a8d" stroke-width="2.4" stroke-linecap="round" stroke-linejoin="round"/><rect x="348.45" y="281.15" width="5.1" height="5.1" rx="1.6" stroke="#8a8a8d" stroke-width="2.4" stroke-linecap="round" stroke-linejoin="round"/><circle cx="1058" cy="368.5" r="14.4" stroke="#4f44e0" stroke-width="2.6" stroke-linecap="round" stroke-linejoin="round"/><path d="M1054.6 366.8 H1058 V376 M1054.6 376 H1062" stroke="#4f44e0" stroke-width="2.6" stroke-linecap="round" stroke-linejoin="round"/><circle cx="1057.8" cy="361.5" r="1.8" fill="#4f44e0"/><path d="M3104 391 L3103.4 367.4 A4 4 0 0 1 3107.4 363.4 H3113 A3.4 3.4 0 0 1 3116.4 366.4 A3.4 3.4 0 0 0 3119.8 369.8 H3129.4 A4.2 4.2 0 0 1 3133.6 374 V376.6" stroke="#222226" stroke-width="3" stroke-linecap="round" stroke-linejoin="round"/><path d="M3111.4 376.9 H3133.2 A3 3 0 0 1 3136 380.9 L3132.6 391.6 A4 4 0 0 1 3128.8 394.4 H3107.2 A3 3 0 0 1 3104.4 390.4 L3107.6 379.7 A4 4 0 0 1 3111.4 376.9 Z" stroke="#222226" stroke-width="3" stroke-linecap="round" stroke-linejoin="round"/><rect x="1034.2" y="516.8" width="31.5" height="29.9" rx="5" stroke="#8a8a8d" stroke-width="2.6" stroke-linecap="round" stroke-linejoin="round"/><path d="M1034.2 526.4 H1065.7 M1040.5 514.4 V521.6 M1059.4 514.4 V521.6" stroke="#8a8a8d" stroke-width="2.6" stroke-linecap="round" stroke-linejoin="round"/><rect x="1040.8" y="534.5" width="5.8" height="6" stroke="#8a8a8d" stroke-width="2.6" stroke-linecap="round" stroke-linejoin="round" stroke-linejoin="miter"/><path d="M3291.8 515.6 V543 A3.4 3.4 0 0 0 3295.2 546.4 H3323 M3297.4 531.5 H3322.6" stroke="#27272b" stroke-width="2.6" stroke-linecap="round" stroke-linejoin="round"/><path d="M3523.6 515.6 V543 A3.4 3.4 0 0 0 3527 546.4 H3554.8 M3529.4 522.8 H3554.8 M3529.4 531.6 H3549.6 M3529.4 540.3 H3541" stroke="#27272b" stroke-width="2.6" stroke-linecap="round" stroke-linejoin="round"/><circle cx="3330.1" cy="644.5" r="12" stroke="#8a8a8d" stroke-width="3.1"/><path d="M3339 653.4 L3349.4 663.6" stroke="#8a8a8d" stroke-width="3.2" stroke-linecap="round"/></svg>
<div style="position:absolute;left:3165px;top:212px;width:626px;height:237px;box-sizing:border-box;background:#fff;border-radius:24px;box-shadow:0 0 0 1.5px rgba(0,0,0,.08),0 6px 26px rgba(0,0,0,.10);"></div>
<div style="position:absolute;left:3165px;top:355px;width:626px;height:94px;box-sizing:border-box;background:#f6f6f6;border-radius:0 0 24px 24px;border-top:2px solid #ececec;"></div>
<div style="position:absolute;left:3165px;top:322px;width:626px;height:2px;box-sizing:border-box;background:#f4f4f4;"></div>
<div style="position:absolute;left:3172.5px;top:220px;width:611.0px;height:93.5px;box-sizing:border-box;background:#dcdaf8;border-radius:22px;"></div>
<div style="position:absolute;left:3180.5px;top:227.5px;width:595.0px;height:78.5px;box-sizing:border-box;background:#fff;border:2.4px solid #4236dc;border-radius:15px;"></div>
<div style="position:absolute;left:3256.5px;top:248px;width:2.5px;height:37px;box-sizing:border-box;background:#1b1b1f;"></div>
<div style="position:absolute;top:247.0px;font:400 30px/39px 'Liberation Sans',Arial,sans-serif;color:#939395;letter-spacing:-0.16px;white-space:nowrap;left:3258.2px;">Save to dashboard...</div>
<div style="position:absolute;top:383.5px;font:400 25.8px/33px 'Liberation Sans',Arial,sans-serif;color:#5a5c60;letter-spacing:0.51px;white-space:nowrap;-webkit-text-stroke:1.25px #5a5c60;left:3333.1px;">Save to New Dashboard</div>
<svg style="position:absolute;left:0;top:0" width="3840" height="2082" viewBox="0 0 3840 2082" fill="none"><circle cx="3213.6" cy="262.6" r="12" stroke="#8a8a8d" stroke-width="3.1"/><path d="M3222.5 271.5 L3232.6 281.6" stroke="#8a8a8d" stroke-width="3.2" stroke-linecap="round"/></svg>
<div style="position:absolute;left:-300px;top:458px;width:300px;height:1234px;box-sizing:border-box;box-shadow:0 0 60px rgba(0,0,0,.205);"></div>
<div style="position:absolute;left:0px;top:0px;width:3840px;height:2px;box-sizing:border-box;background:#565656;"></div>
<div style="position:absolute;left:3836px;top:2px;width:2px;height:2080px;box-sizing:border-box;background:rgba(255,255,255,.2);"></div>
<div style="position:absolute;left:3838px;top:0px;width:2px;height:2082px;box-sizing:border-box;background:#14110f;"></div>
</div></body></html>
